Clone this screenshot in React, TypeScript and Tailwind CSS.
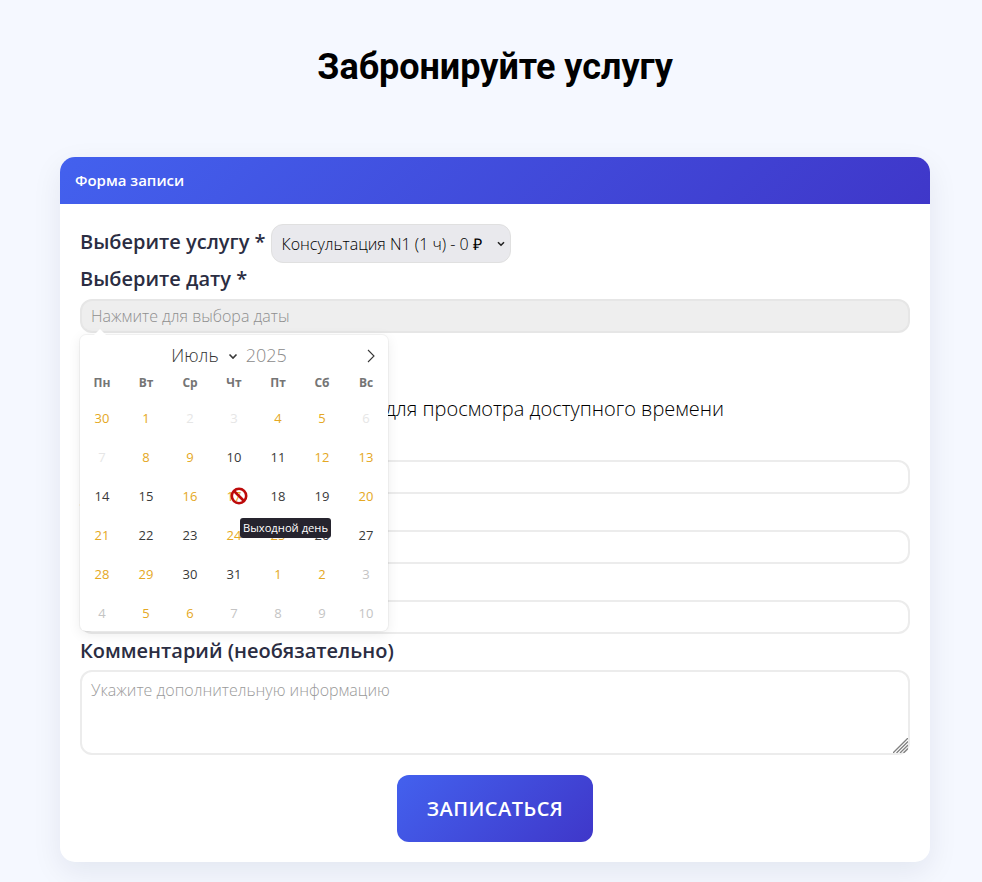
const weekdays = ['Пн', 'Вт', 'Ср', 'Чт', 'Пт', 'Сб', 'Вс'];

type Kind = 'avail' | 'busy' | 'off' | 'other';

const days: { d: number; k: Kind }[] = [
  { d: 30, k: 'busy' }, { d: 1, k: 'busy' }, { d: 2, k: 'off' }, { d: 3, k: 'off' }, { d: 4, k: 'busy' }, { d: 5, k: 'busy' }, { d: 6, k: 'off' },
  { d: 7, k: 'off' }, { d: 8, k: 'busy' }, { d: 9, k: 'busy' }, { d: 10, k: 'avail' }, { d: 11, k: 'avail' }, { d: 12, k: 'busy' }, { d: 13, k: 'busy' },
  { d: 14, k: 'avail' }, { d: 15, k: 'avail' }, { d: 16, k: 'busy' }, { d: 17, k: 'busy' }, { d: 18, k: 'avail' }, { d: 19, k: 'avail' }, { d: 20, k: 'busy' },
  { d: 21, k: 'busy' }, { d: 22, k: 'avail' }, { d: 23, k: 'avail' }, { d: 24, k: 'busy' }, { d: 25, k: 'busy' }, { d: 26, k: 'avail' }, { d: 27, k: 'avail' },
  { d: 28, k: 'busy' }, { d: 29, k: 'busy' }, { d: 30, k: 'avail' }, { d: 31, k: 'avail' }, { d: 1, k: 'busy' }, { d: 2, k: 'busy' }, { d: 3, k: 'other' },
  { d: 4, k: 'other' }, { d: 5, k: 'busy' }, { d: 6, k: 'busy' }, { d: 7, k: 'other' }, { d: 8, k: 'other' }, { d: 9, k: 'other' }, { d: 10, k: 'other' },
];

const dayColor: Record<Kind, string> = {
  avail: 'text-[#393939]',
  busy: 'text-[#e5a823]',
  off: 'text-[#e6e6e6]',
  other: 'text-[#c4c4c4]',
};

const Calendar = () => (
  <div className="absolute left-0 top-[36px] z-10 h-[296px] w-[308px] overflow-hidden rounded-[6px] bg-white shadow-[0_3px_13px_rgba(0,0,0,0.08),0_0_0_1px_rgba(0,0,0,0.04)]">
    <div className="relative flex h-[41px] items-center justify-center pr-[10px] text-[18px] font-light text-[#333333]">
      <span>Июль</span>
      <svg className="ml-[9px] mr-[8px] h-[10px] w-[10px]" viewBox="0 0 10 10" fill="none" stroke="#393939" strokeWidth="1.6">
        <path d="M1.5 3.5 5 7l3.5-3.5" />
      </svg>
      <span className="text-[#8a8a8a]">2025</span>
      <svg className="absolute right-[11px] top-[14px] h-[14px] w-[12px]" viewBox="0 0 12 14" fill="none" stroke="#393939" strokeWidth="1.1">
        <path d="M3 1l6 6-6 6" />
      </svg>
    </div>
    <div className="grid h-[23px] grid-cols-7 items-start text-center text-[12px] leading-[14px] font-bold text-[#757575]">
      {weekdays.map((w) => (
        <span key={w}>{w}</span>
      ))}
    </div>
    <div className="grid grid-cols-7">
      {days.map((c, i) => (
        <div key={i} className={`flex h-[39px] items-center justify-center text-[13px] ${dayColor[c.k]}`}>
          {c.d}
        </div>
      ))}
    </div>
    {/* forbidden cursor over 17 */}
    <svg className="absolute left-[150px] top-[152px] h-[18px] w-[18px]" viewBox="0 0 18 18" fill="none">
      <circle cx="9" cy="9" r="7.2" stroke="#bd0a0a" strokeWidth="2.6" />
      <path d="M4 4l10 10" stroke="#bd0a0a" strokeWidth="2.6" />
    </svg>
    <div className="absolute left-[160px] top-[183px] flex h-[20px] w-[91px] items-center justify-center rounded-[3px] bg-[#26242e] text-[11.2px] whitespace-nowrap text-white">
      Выходной день
    </div>
  </div>
);

const labelCls = "block text-[20px] leading-[27px] font-semibold text-[#2b2d42]";
const inputCls = "block h-[34px] w-full rounded-[12px] border-2 border-[#ececec] bg-white px-[9px] text-[16px] font-light outline-none placeholder:text-[#9a9a9a]";

const App = () => {
  return (
    <div className="min-h-[882px] overflow-hidden bg-[#f5f8ff] font-['Open_Sans',sans-serif]">
      <div className="ml-[60px] w-[870px] pb-[20px]">
        <h1 className="pt-[41px] pb-[64px] text-center font-['Roboto',sans-serif] text-[36px] leading-[52px] font-bold text-black">
          Забронируйте услугу
        </h1>

        <div className="rounded-[15px] bg-white shadow-[0_10px_30px_rgba(10,20,60,0.08)]">
          <div className="flex h-[47px] items-center rounded-t-[15px] bg-[linear-gradient(135deg,#4361ee,#3f37c9)] px-[15px] text-[15px] font-semibold text-white">
            Форма записи
          </div>

          <div className="p-[20px]">
            <div className="flex items-center gap-[5px]">
              <label className="pb-[4px] text-[20px] font-semibold text-[#2b2d42]">Выберите услугу *</label>
              <div className="relative">
                <select className="h-[39px] w-[240px] appearance-none rounded-[12px] border border-[#e0e0e0] bg-[#e9e9ed] pl-[10px] text-[16px] font-light text-black outline-none">
                  <option>Консультация N1 (1 ч) - 0 ₽</option>
                </select>
                <svg className="absolute right-[6px] top-[16px] h-[8px] w-[8px]" viewBox="0 0 8 8" fill="none" stroke="#222" strokeWidth="1.6">
                  <path d="M1 2.2 4 5.2l3-3" />
                </svg>
              </div>
            </div>

            <label className="mt-[2px] mb-[7px] block text-[20px] leading-[27px] font-semibold text-[#2b2d42]">Выберите дату *</label>
            <div className="relative">
              <input
                readOnly
                placeholder="Нажмите для выбора даты"
                className="block h-[34px] w-full rounded-[12px] border-2 border-[#e6e6e6] bg-[#eeeeee] px-[9px] text-[16px] font-light outline-none placeholder:text-[#8f8f8f]"
              />
              <div className="absolute left-[14px] top-[30px] z-20 h-0 w-0 border-x-[6px] border-b-[6px] border-x-transparent border-b-white" />
              <Calendar />
            </div>

            <label className={`${labelCls} mt-[22px]`}>Выберите время *</label>
            <p className="mt-[13px] text-[20px] leading-[27px] font-light text-black">
              Сначала выберите услугу и дату для просмотра доступного времени
            </p>

            <label className={`${labelCls} mt-[5px] mb-[6px]`}>Ваше имя *</label>
            <input className={inputCls} />
            <label className={`${labelCls} mt-[3px] mb-[6px]`}>Телефон *</label>
            <input className={inputCls} />
            <label className={`${labelCls} mt-[3px] mb-[6px]`}>Email *</label>
            <input className={inputCls} />
            <label className={`${labelCls} mt-[3px] mb-[6px]`}>Комментарий (необязательно)</label>
            <div className="relative">
              <textarea
                placeholder="Укажите дополнительную информацию"
                className="block h-[85px] w-full resize-none rounded-[12px] border-2 border-[#ececec] bg-white px-[9px] py-[6px] text-[16px] font-light outline-none placeholder:text-[#9a9a9a]"
              />
              <svg className="absolute right-[2px] bottom-[2px] h-[15px] w-[15px]" viewBox="0 0 15 15" fill="none" stroke="#808080" strokeWidth="1.3">
                <path d="M0 15 15 0M3.5 15 15 3.5M7 15l8-8M10.5 15l4.5-4.5" />
              </svg>
            </div>

            <div className="mt-[20px] flex justify-center">
              <button className="h-[67px] w-[196px] rounded-[12px] bg-[linear-gradient(135deg,#4361ee,#3f37c9)] text-[20px] font-semibold tracking-[0.5px] text-white">
                ЗАПИСАТЬСЯ
              </button>
            </div>
          </div>
        </div>
      </div>
    </div>
  );
};

export default App;
